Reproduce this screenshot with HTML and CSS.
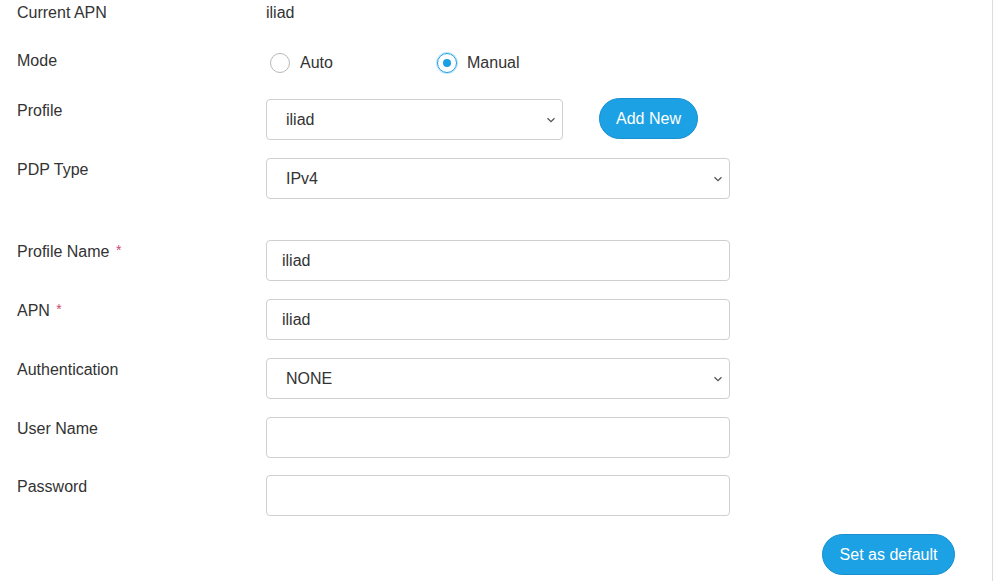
FILE: index.html
```html
<!DOCTYPE html>
<html>
<head>
<meta charset="utf-8">
<link rel="stylesheet" href="styles.css">
</head>
<body>
<div class="panel">
  <form class="apn-form">
    <div class="row row-current">
      <div class="label">Current APN</div>
      <div class="value">iliad</div>
    </div>
    <div class="row row-mode">
      <div class="label">Mode</div>
      <div class="radios">
        <label class="radio"><span class="dot"></span>Auto</label>
        <label class="radio checked"><span class="dot"></span>Manual</label>
      </div>
    </div>
    <div class="row">
      <div class="label">Profile</div>
      <div class="field-line">
        <div class="select short"><span class="sel-text">iliad</span>
          <svg class="chev" width="10" height="6" viewBox="0 0 10 6"><path d="M1.5 1.2 L5 4.6 L8.5 1.2" fill="none" stroke="#555" stroke-width="1.3"/></svg>
        </div>
        <button type="button" class="btn btn-add">Add New</button>
      </div>
    </div>
    <div class="row row-pdp">
      <div class="label">PDP Type</div>
      <div class="select"><span class="sel-text">IPv4</span>
        <svg class="chev" width="10" height="6" viewBox="0 0 10 6"><path d="M1.5 1.2 L5 4.6 L8.5 1.2" fill="none" stroke="#555" stroke-width="1.3"/></svg>
      </div>
    </div>
    <div class="row">
      <div class="label">Profile Name <span class="req">*</span></div>
      <div class="input">iliad</div>
    </div>
    <div class="row">
      <div class="label">APN <span class="req">*</span></div>
      <div class="input">iliad</div>
    </div>
    <div class="row">
      <div class="label">Authentication</div>
      <div class="select"><span class="sel-text">NONE</span>
        <svg class="chev" width="10" height="6" viewBox="0 0 10 6"><path d="M1.5 1.2 L5 4.6 L8.5 1.2" fill="none" stroke="#555" stroke-width="1.3"/></svg>
      </div>
    </div>
    <div class="row row-user">
      <div class="label">User Name</div>
      <div class="input"></div>
    </div>
    <div class="row row-last">
      <div class="label">Password</div>
      <div class="input"></div>
    </div>
    <div class="actions">
      <button type="button" class="btn btn-default">Set as default</button>
    </div>
  </form>
</div>
</body>
</html>
```

FILE: styles.css
```css
html, body {
  margin: 0;
  padding: 0;
  background: #fff;
}
body {
  font-family: "Liberation Sans", Arial, sans-serif;
  font-size: 16px;
  color: #333;
  width: 1008px;
  height: 581px;
  overflow: hidden;
}
.panel {
  width: 993px;
  height: 581px;
  box-sizing: border-box;
  border-right: 1px solid #dcdcdc;
  padding: 3px 37px 0 17px;
}
.apn-form {
  display: flex;
  flex-direction: column;
}
.row {
  display: grid;
  grid-template-columns: 249px 464px;
  margin-bottom: 18px;
  align-items: start;
}
.label {
  line-height: 20px;
  padding-top: 2px;
}
.row-current {
  margin-bottom: 28px;
}
.row-current .label {
  padding-top: 0;
}
.value {
  line-height: 20px;
}
.row-mode {
  margin-bottom: 26px;
}
.row-mode .label {
  padding-top: 0;
}
.radios {
  display: flex;
  padding-top: 2px;
}
.radio {
  display: flex;
  align-items: center;
  width: 167px;
  line-height: 20px;
  padding-left: 4px;
  box-sizing: border-box;
}
.dot {
  width: 18px;
  height: 18px;
  border: 1px solid #b8b8b8;
  border-radius: 50%;
  margin-right: 10px;
  position: relative;
  flex: none;
}
.radio.checked .dot {
  border-color: #1a9fe3;
  box-shadow: 0 0 0 1px rgba(26, 159, 227, 0.25);
}
.radio.checked .dot::after {
  content: "";
  position: absolute;
  left: 5px;
  top: 5px;
  width: 8px;
  height: 8px;
  border-radius: 50%;
  background: #1a9fe3;
}
.field-line {
  display: flex;
  align-items: flex-start;
  width: 500px;
}
.select, .input {
  height: 41px;
  box-sizing: border-box;
  border: 1px solid #cfcfcf;
  border-radius: 4px;
  display: flex;
  align-items: center;
  width: 464px;
  position: relative;
  background: #fff;
}
.select {
  padding-left: 19px;
}
.input {
  padding-left: 15px;
}
.select.short {
  width: 297px;
}
.chev {
  position: absolute;
  right: 6px;
  top: 17px;
}
.row-pdp {
  margin-bottom: 41px;
}
.row-user {
  margin-bottom: 17px;
}
.req {
  color: #cc4a6e;
  font-size: 14px;
  position: relative;
  top: -2px;
  margin-left: 2px;
}
.btn {
  font-family: "Liberation Sans", Arial, sans-serif;
  font-size: 16px;
  color: #fff;
  background: #1ca1e4;
  border: 1px solid #1890cf;
  border-radius: 21px;
  height: 41px;
  cursor: pointer;
}
.btn-add {
  margin-left: 36px;
  margin-top: -1px;
  width: 99px;
  padding: 0;
}
.row-last {
  margin-bottom: 18px;
}
.actions {
  display: flex;
  justify-content: flex-end;
}
.btn-default {
  width: 133px;
  padding: 0;
}
```
